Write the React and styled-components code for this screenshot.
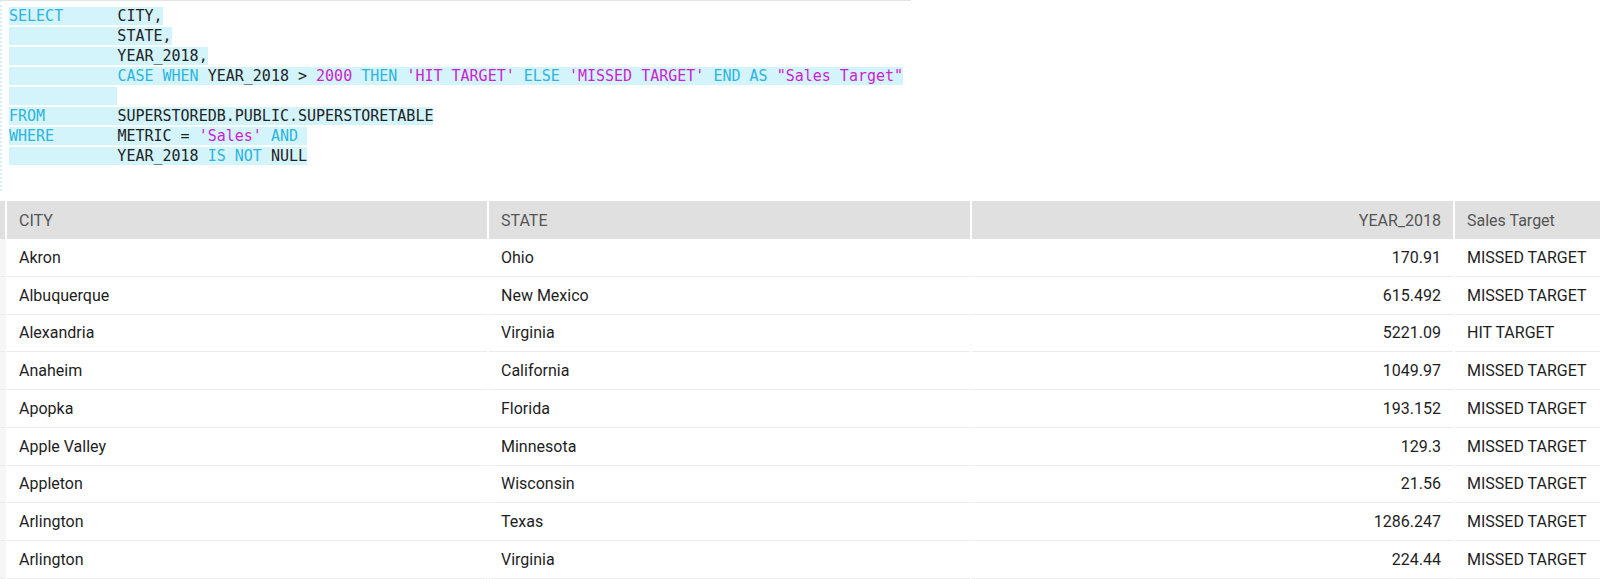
import React from "react";
import styled, { createGlobalStyle } from "styled-components";

const Global = createGlobalStyle`
  html, body {
    margin: 0;
    padding: 0;
    background: #ffffff;
    overflow: hidden;
  }
`;

const Page = styled.div`
  width: 1600px;
  display: flex;
  flex-direction: column;
  gap: 10px;
`;

const Editor = styled.div`
  width: 911px;
  height: 191px;
  box-sizing: border-box;
  border-top: 1px solid #e4e4e4;
  border-left: 2px dotted #d6eef6;
  padding: 5px 0 0 7px;
`;

const Code = styled.pre`
  margin: 0;
  font-family: "DejaVu Sans Mono", "Liberation Mono", monospace;
  font-size: 15px;
  line-height: 20px;
  color: #222222;
`;

const Line = styled.div`
  height: 20px;
  white-space: pre;
`;

const Sel = styled.span`
  background: #d4f4fb;
`;

const Tok = styled.span`
  color: ${(p) => (p.$k === "kw" ? "#2db4de" : p.$k === "str" ? "#cc1fd0" : "#222222")};
`;

const Table = styled.table`
  width: 1600px;
  border-collapse: collapse;
  table-layout: fixed;
  font-family: Roboto, "Liberation Sans", sans-serif;
  font-size: 16px;
`;

const Th = styled.th`
  height: 38px;
  padding: 0 12px;
  background: #e0e0e0;
  color: #555555;
  font-weight: 400;
  text-align: ${(p) => (p.$right ? "right" : "left")};
  border-left: 2px solid #ffffff;
  &:first-child {
    border-left: none;
    padding: 0;
  }
`;

const Row = styled.tr`
  border-bottom: 1px solid #ececec;
`;

const Td = styled.td`
  height: 36.75px;
  padding: 0 12px;
  color: #1e1e1e;
  text-align: ${(p) => (p.$right ? "right" : "left")};
  border-left: 2px solid transparent;
  white-space: nowrap;
  &:first-child {
    border-left: none;
    padding: 0;
    background: #f6f6f6;
  }
`;

const sql = [
  [["kw", "SELECT      "], ["", "CITY,"]],
  [["", "            STATE,"]],
  [["", "            YEAR_2018,"]],
  [
    ["", "            "],
    ["kw", "CASE WHEN "],
    ["", "YEAR_2018 > "],
    ["str", "2000 "],
    ["kw", "THEN "],
    ["str", "'HIT TARGET' "],
    ["kw", "ELSE "],
    ["str", "'MISSED TARGET' "],
    ["kw", "END AS "],
    ["str", "\"Sales Target\""],
  ],
  [["", "            "]],
  [["kw", "FROM        "], ["", "SUPERSTOREDB.PUBLIC.SUPERSTORETABLE"]],
  [["kw", "WHERE       "], ["", "METRIC = "], ["str", "'Sales' "], ["kw", "AND "]],
  [["", "            YEAR_2018 "], ["kw", "IS NOT "], ["", "NULL"]],
];

const rows = [
  ["Akron", "Ohio", "170.91", "MISSED TARGET"],
  ["Albuquerque", "New Mexico", "615.492", "MISSED TARGET"],
  ["Alexandria", "Virginia", "5221.09", "HIT TARGET"],
  ["Anaheim", "California", "1049.97", "MISSED TARGET"],
  ["Apopka", "Florida", "193.152", "MISSED TARGET"],
  ["Apple Valley", "Minnesota", "129.3", "MISSED TARGET"],
  ["Appleton", "Wisconsin", "21.56", "MISSED TARGET"],
  ["Arlington", "Texas", "1286.247", "MISSED TARGET"],
  ["Arlington", "Virginia", "224.44", "MISSED TARGET"],
];

export default function App() {
  return (
    <Page>
      <Global />
      <Editor>
        <Code>
          {sql.map((line, i) => (
            <Line key={i}>
              <Sel>
                {line.map(([k, t], j) => (
                  <Tok key={j} $k={k}>
                    {t}
                  </Tok>
                ))}
              </Sel>
            </Line>
          ))}
        </Code>
      </Editor>
      <Table>
        <colgroup>
          <col style={{ width: 6 }} />
          <col style={{ width: 482 }} />
          <col style={{ width: 483 }} />
          <col style={{ width: 483 }} />
          <col />
        </colgroup>
        <thead>
          <tr>
            <Th />
            <Th>CITY</Th>
            <Th>STATE</Th>
            <Th $right>YEAR_2018</Th>
            <Th>Sales Target</Th>
          </tr>
        </thead>
        <tbody>
          {rows.map((r, i) => (
            <Row key={i}>
              <Td />
              <Td>{r[0]}</Td>
              <Td>{r[1]}</Td>
              <Td $right>{r[2]}</Td>
              <Td>{r[3]}</Td>
            </Row>
          ))}
        </tbody>
      </Table>
    </Page>
  );
}
